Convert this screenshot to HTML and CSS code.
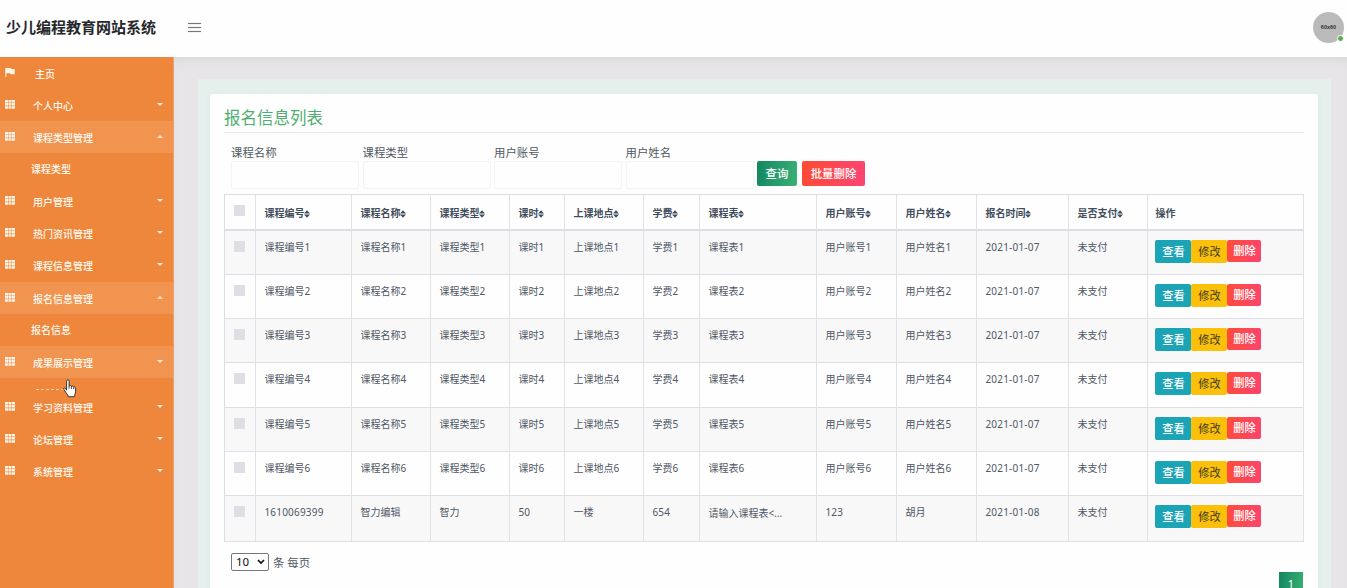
FILE: index.html
```
<!DOCTYPE html>
<html lang="zh-CN">
<head>
<meta charset="utf-8">
<title>少儿编程教育网站系统</title>
<link rel="stylesheet" href="styles.css">
</head>
<body>
<svg class="defs" width="0" height="0">
  <symbol id="grid" viewBox="0 0 10 9"><path d="M0 0h3v2.500H0zM3.500 0h3v2.500h-3zM7 0h3v2.500H7zM0 3.100h3v2.500H0zM3.500 3.100h3v2.500h-3zM7 3.100h3v2.500H7zM0 6.200h3v2.600H0zM3.500 6.200h3v2.600h-3zM7 6.200h3v2.600H7z"/></symbol>
  <symbol id="flag" viewBox="0 0 10 9"><path d="M.3 0h5.500l.4 1.100h3.500v5.200H5.800L5.400 5.200H1.400V9H.3z"/></symbol>
</svg>
<header class="topbar">
  <h1 class="brand">少儿编程教育网站系统</h1>
  <div class="burger"><i></i><i></i><i></i></div>
  <div class="avatar">60x60<span class="online"></span></div>
</header>
<div class="layout">
  <nav class="sidebar" id="sidebar"></nav>
  <main class="main">
    <div class="content">
      <section class="panel">
        <h2 class="title">报名信息列表</h2>
        <form class="search">
          <label class="field">课程名称<input class="input"></label>
          <label class="field">课程类型<input class="input"></label>
          <label class="field">用户账号<input class="input"></label>
          <label class="field">用户姓名<input class="input"></label>
          <button type="button" class="btn query">查询</button>
          <button type="button" class="btn batch">批量删除</button>
        </form>
        <table class="table">
          <colgroup><col class="c31"><col class="c96"><col class="c79"><col class="c79"><col class="c55"><col class="c79"><col class="c56"><col class="c117"><col class="c80"><col class="c80"><col class="c92"><col class="c79"><col class="c156"></colgroup>
          <thead><tr id="head"></tr></thead>
          <tbody id="rows"></tbody>
        </table>
        <div class="perpage">
          <span class="select">10<svg width="8" height="6" viewBox="0 0 8 6"><path d="M1 1l3 3 3-3" fill="none" stroke="#111" stroke-width="1.7"/></svg></span>
          <span>条 每页</span>
        </div>
        <div class="pager"><span class="page">1</span></div>
      </section>
    </div>
  </main>
</div>
<svg class="cursor" width="14" height="19" viewBox="0 0 14 19"><path d="M3.6 11.2V2.2c0-1.9 2.5-1.9 2.5 0v5.1c.3-1.3 2.3-1 2.3.3.5-1 2.2-.7 2.2.6.6-.8 2-.4 2 .9v4c0 1.8-1.2 2.6-1.2 4.6H5.2c-.2-2-1.5-3-2.4-4.400L.9 10.500c-.8-1.400.8-2.200 1.700-1.100z" fill="#fff" stroke="#222" stroke-width=".9"/><path d="M6.1 7.300v2.500M8.400 7.600v2.400M10.600 8.200v2" stroke="#222" stroke-width=".8"/></svg>
<script src="app.js"></script>
</body>
</html>
```
FILE: styles.css
```
* { box-sizing: border-box; }
body { margin: 0; height: 588px; overflow: hidden; background: #e7e5e8; color: #4e5764; font-family: "Noto Sans", "Noto Sans CJK SC", sans-serif; font-size: 10px; }
.defs { position: absolute; }
.topbar { display: flex; align-items: center; height: 57px; background: #fefefe; padding: 0 3px 3px 5px; }
.brand { margin: 0; width: 183px; padding-left: 1px; font-size: 15px; line-height: 20px; font-weight: 700; color: #25272b; white-space: nowrap; }
.burger { display: flex; flex-direction: column; gap: 3px; width: 13px; }
.burger i { height: 1px; background: #777; box-shadow: 0 0 1px #888; }
.avatar { position: relative; margin-left: auto; width: 31px; height: 31px; border-radius: 50%; background: #bababa; color: #333; font: bold 5.500px/31px "Liberation Sans", sans-serif; text-align: center; }
.online { position: absolute; right: 0; bottom: 1px; width: 7px; height: 7px; border-radius: 50%; background: #5cab55; border: 1.500px solid #fff; }
.layout { display: flex; height: 531px; }
.sidebar { width: 174px; flex: none; background: #ee873b; color: #fff8ef; border-right: 1px solid #e9a16f; }
.item { display: flex; align-items: center; height: 32.150px; padding: 1px 10px 0 5px; }
.item.lit { background: #f0944f; }
.icon { width: 10px; height: 9px; fill: #fff5e9; margin: -3px 18px 0 0; }
.home .icon { margin-right: 20px; }
.label { line-height: 14px; font-weight: 500; }
.caret { margin: -3px 0 0 auto; border: 3px solid transparent; border-top-color: #ffebd8; border-bottom: 0; }
.caret.up { border-top: 0; border-bottom: 3px solid #ffe0c5; }
.sub { height: 32.150px; padding: 9px 0 0 31px; line-height: 15px; font-weight: 500; }
.opening { height: 13px; padding: 11px 0 0 36px; }
.opening i { display: block; width: 28px; border-top: 1px dashed #f9cda8; }
.main { flex: 1; padding: 22px 17px 0 24px; box-shadow: inset 0 7px 8px -3px #dadadb; }
.content { height: 520px; padding: 14px 12px 0 11px; background: #e5f0ec; }
.panel { height: 520px; padding: 11px 14px 0 14px; border: 1px solid #e5eaf0; border-radius: 3px; background: #fefefe; box-shadow: 0 0 4px #dce7ea; display: flex; flex-direction: column; }
.title { flex: none; margin: 0; height: 28px; border-bottom: 1px solid #e7e7e9; color: #4fae72; font-size: 16.500px; line-height: 25px; font-weight: 400; }
.search { flex: none; display: flex; height: 61px; padding: 12px 0 0 7px; }
.field { width: 131.500px; flex: none; font-size: 11.400px; line-height: 15px; color: #505863; }
.input { display: block; width: 128px; height: 28px; margin-top: 1px; border: 1px solid #f2f4f7; border-radius: 2px; background: #fefefe; }
.btn { height: 25px; margin: 16px 5px 0 0; padding: 0; border: 0; border-radius: 2px; color: #fff; font: 500 11.400px/25px "Noto Sans", "Noto Sans CJK SC", sans-serif; }
.query { width: 40px; background: linear-gradient(100deg, #128760, #3bb076); }
.batch { width: 63px; background: linear-gradient(100deg, #ff4b32, #fc4475); }
.table { flex: none; width: 1080px; table-layout: fixed; border-collapse: separate; border-spacing: 0; border-left: 1px solid #dbdde3; border-top: 1px solid #dbdde3; }
.c31 { width: 31px; } .c96 { width: 96px; } .c79 { width: 79px; } .c55 { width: 55px; } .c56 { width: 56px; } .c117 { width: 117px; } .c80 { width: 80px; } .c92 { width: 92px; } .c156 { width: 156px; }
.table th, .table td { border-right: 1px solid #e0e2e7; border-bottom: 1px solid #dfe1e6; text-align: left; white-space: nowrap; vertical-align: top; }
.table th { height: 36px; padding: 11px 0 0 8.400px; border-bottom: 2px solid #dcdde5; font-weight: 700; line-height: 15px; color: #414d5b; }
.table td { height: 44.170px; padding: 9px 0 0 8.400px; line-height: 15px; }
.table th:last-child, .table td:last-child { padding-left: 7.400px; }
.table tbody tr:nth-child(odd) td { background: #f8f8f9; }
.table tbody tr:last-child td { height: 46px; }
.table .num { letter-spacing: .2px; }
.table tbody .long { padding-top: 10px; }
.table .boxcell { padding-left: 9px; padding-top: 10px; }
.check { display: block; width: 11px; height: 11px; background: #dddfe4; }
.sort { width: 6px; height: 8px; vertical-align: -1px; fill: #414d5b; }
.actions { display: flex; }
.act { width: 36px; height: 23px; border-radius: 2px; color: #fff; font-size: 11.200px; line-height: 23px; font-weight: 500; text-align: center; }
.view { background: #1ba3b6; }
.edit { background: #fbc009; color: #3d3824; font-weight: 400; }
.del { width: 34px; height: 22px; line-height: 22px; background: linear-gradient(100deg, #ff4c38, #fc446f); }
.perpage { flex: none; display: flex; gap: 4px; margin: 11px 0 0 7px; font-size: 11.400px; line-height: 19px; }
.select { display: flex; align-items: center; justify-content: space-between; width: 38px; height: 18px; padding: 0 3px 0 4px; border: 1px solid #777; border-radius: 2px; color: #111; font-size: 11.500px; }
.pager { flex: none; display: flex; justify-content: flex-end; }
.page { width: 24px; height: 26px; margin-right: 1px; background: linear-gradient(100deg, #128760, #3bb076); color: #fff; font-size: 11px; line-height: 24px; text-align: center; }
.cursor { position: absolute; left: 63px; top: 379px; }
```
FILE: app.js
```
const menu = [
  ['主页', 'home'], ['个人中心'], ['课程类型管理', 'lit', 'up'], ['课程类型', 'sub'],
  ['用户管理'], ['热门资讯管理'], ['课程信息管理'], ['报名信息管理', 'lit', 'up'], ['报名信息', 'sub'],
  ['成果展示管理', 'lit'], ['', 'opening'], ['学习资料管理'], ['论坛管理'], ['系统管理']
];
document.getElementById('sidebar').innerHTML = menu.map(([text, kind = '', dir = '']) => {
  if (kind === 'sub') return `<div class="sub">${text}</div>`;
  if (kind === 'opening') return '<div class="opening"><i></i></div>';
  const home = kind === 'home';
  return `<div class="item ${kind}"><svg class="icon"><use href="#${home ? 'flag' : 'grid'}"/></svg><span class="label">${text}</span>${home ? '' : `<span class="caret ${dir}"></span>`}</div>`;
}).join('');

const names = ['课程编号', '课程名称', '课程类型', '课时', '上课地点', '学费', '课程表', '用户账号', '用户姓名'];
const sort = '<svg class="sort" viewBox="0 0 6 8"><path d="M0 3.500L3 .3l3 3.200zM0 4.600h6L3 7.800z"/></svg>';
const box = '<span class="check"></span>';
document.getElementById('head').innerHTML = `<th class="boxcell">${box}</th>` +
  [...names, '报名时间', '是否支付'].map(n => `<th>${n}${sort}</th>`).join('') + '<th>操作</th>';

const rows = [1, 2, 3, 4, 5, 6].map(i => [...names.map(n => n + i), '2021-01-07', '未支付']);
rows.push(['1610069399', '智力编辑', '智力', '50', '一楼', '654', '请输入课程表&lt;...', '123', '胡月', '2021-01-08', '未支付']);
const actions = '<div class="actions"><span class="act view">查看</span><span class="act edit">修改</span><span class="act del">删除</span></div>';
document.getElementById('rows').innerHTML = rows.map(r => `<tr><td class="boxcell">${box}</td>` +
  r.map(c => `<td class="${/^[\d-]+$/.test(c) ? 'num' : c.includes('...') ? 'long' : ''}">${c}</td>`).join('') +
  `<td>${actions}</td></tr>`).join('');
```
